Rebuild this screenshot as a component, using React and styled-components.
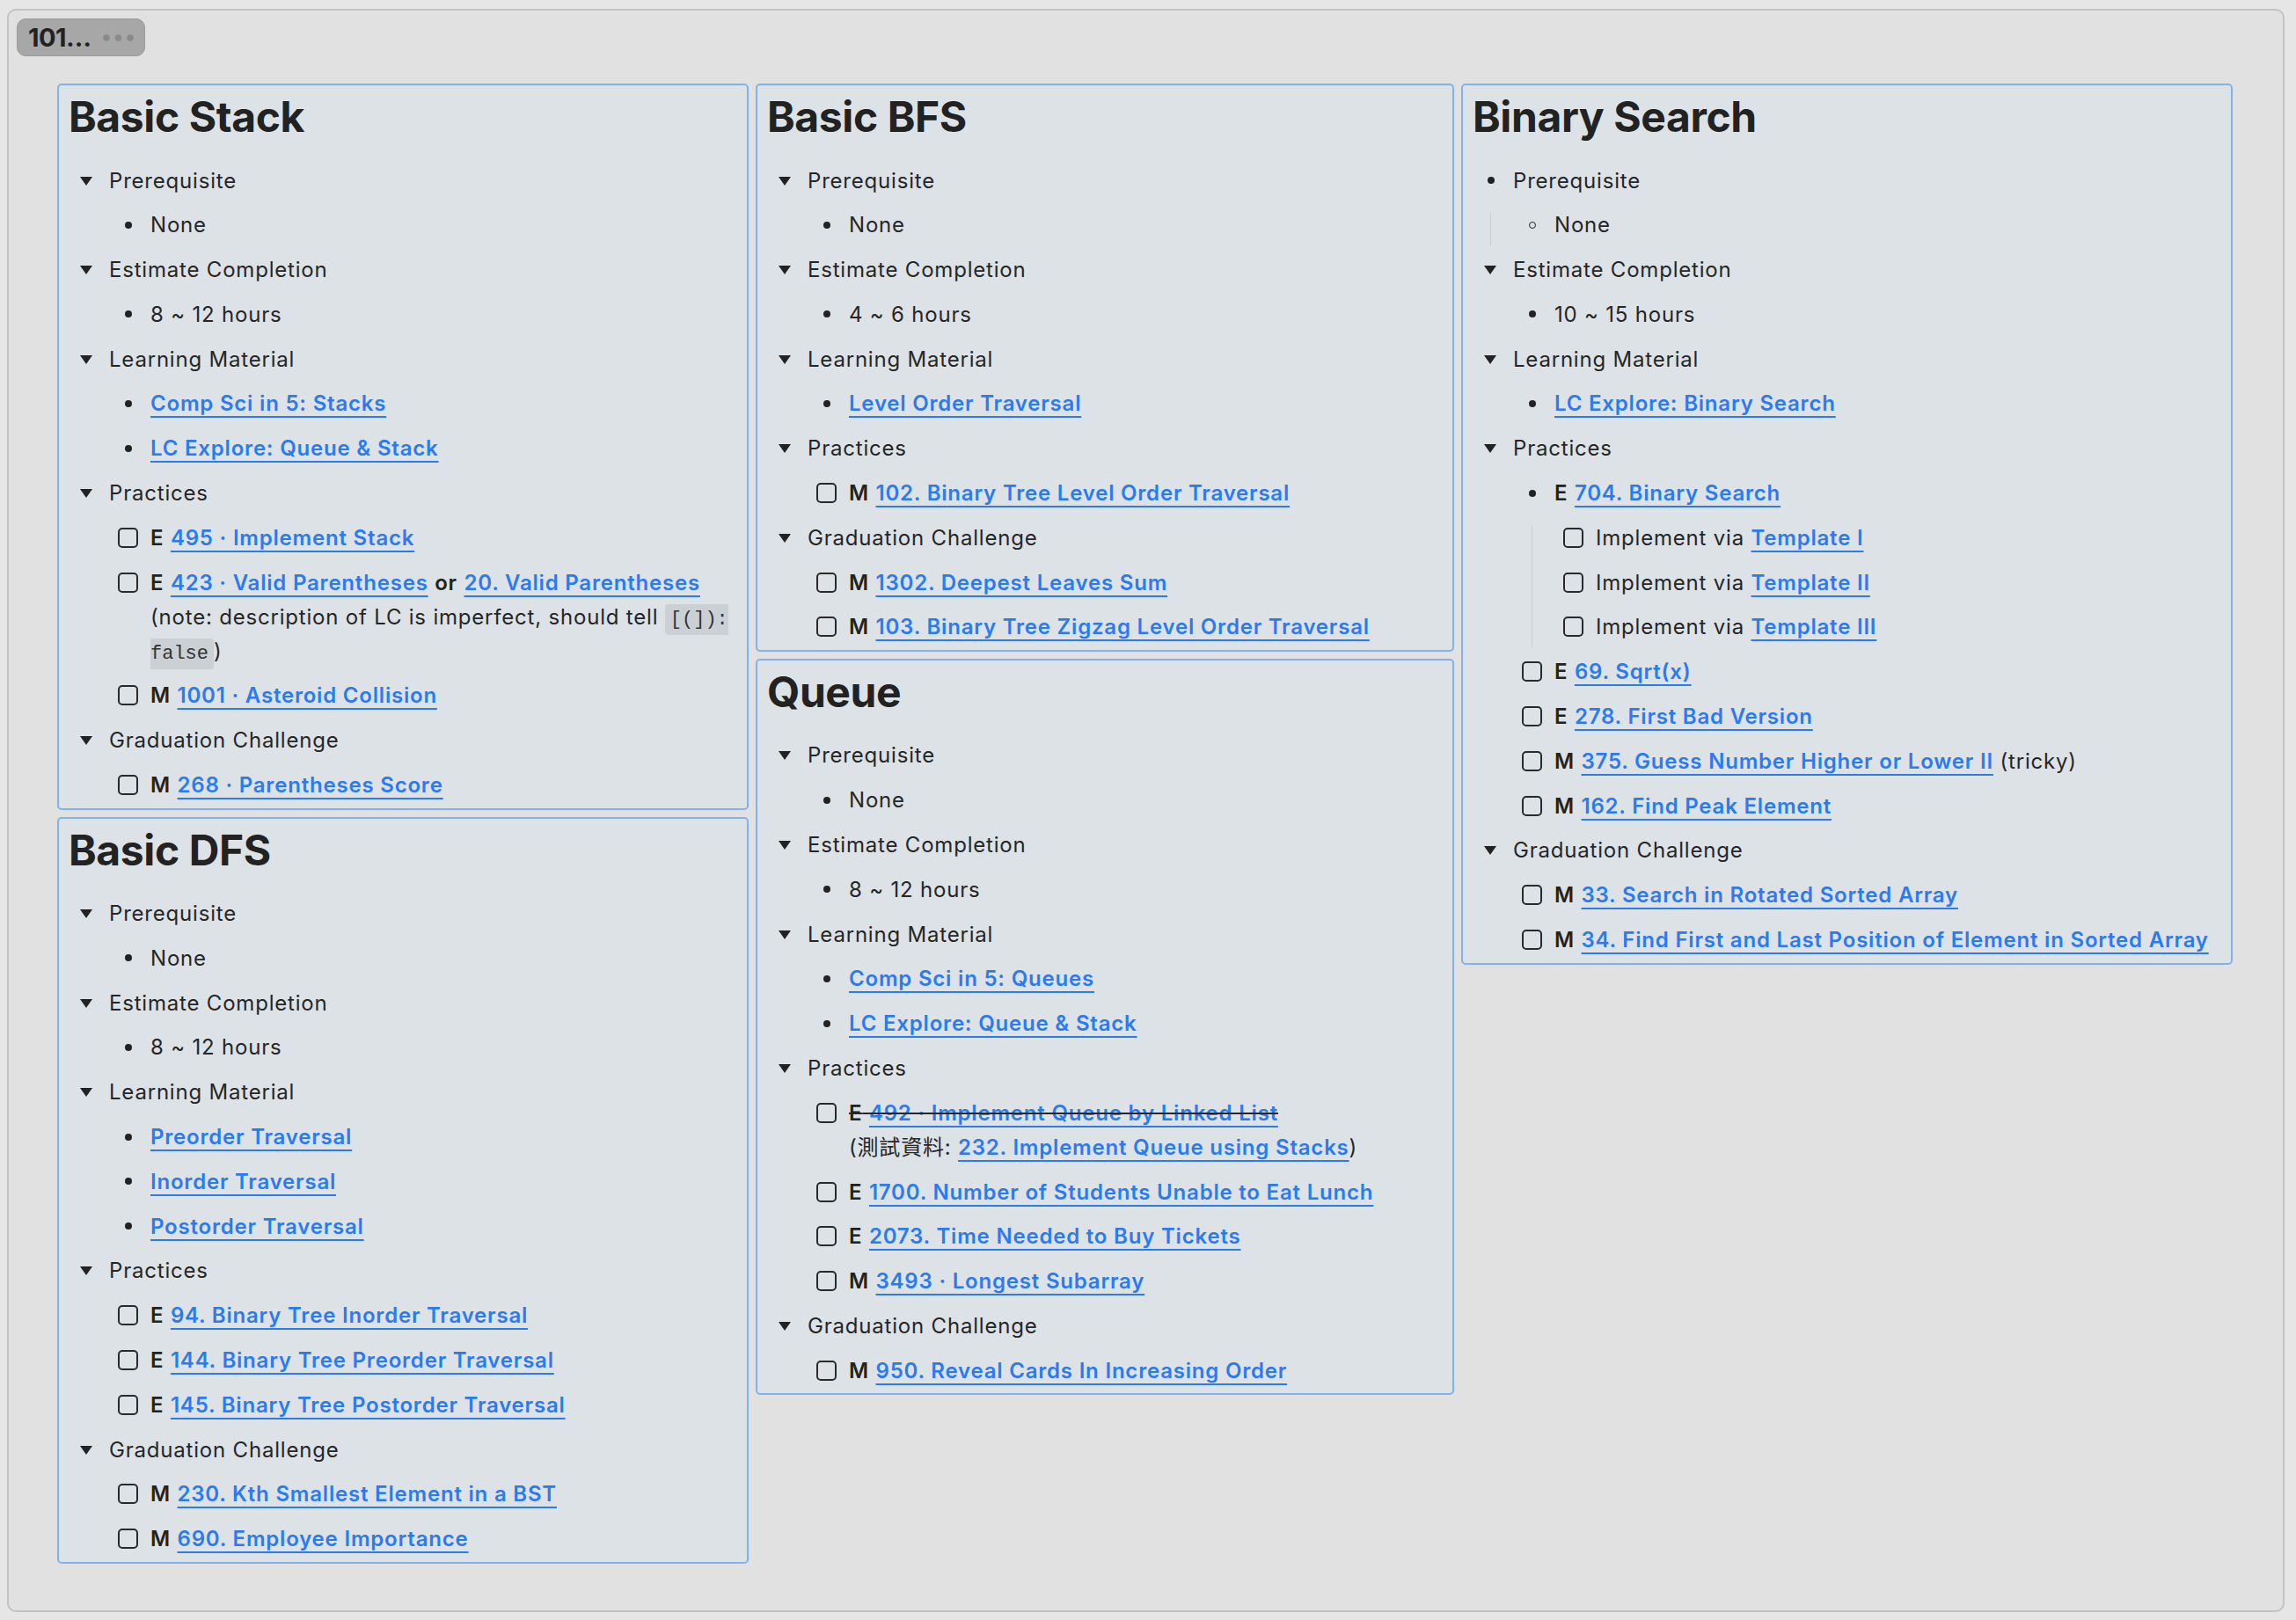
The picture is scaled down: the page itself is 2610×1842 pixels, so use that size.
import styled, { createGlobalStyle, css } from "styled-components";

const GlobalStyle = createGlobalStyle`
    body {
        margin: 0;
        background: #e6e6e6;
        font-family: Inter, "Noto Sans CJK TC", sans-serif;
        color: #262626;
    }
`;

const Frame = styled.div`
    box-sizing: border-box;
    width: 2589px;
    height: 1823px;
    margin: 10px 0 0 8px;
    padding: 9px 0 0 9px;
    background: #e1e1e1;
    border: 2px solid #c3c3c3;
    border-radius: 10px;
`;

const Badge = styled.div`
    box-sizing: border-box;
    display: flex;
    align-items: center;
    gap: 13px;
    width: 146px;
    height: 43px;
    padding-left: 12px;
    background: #a7a7a7;
    border: 1px solid #9b9b9b;
    border-radius: 10px;
    font-size: 29px;
    font-weight: 700;
    letter-spacing: -0.5px;
    color: #222;
`;

const Board = styled.div`
    display: flex;
    align-items: flex-start;
    gap: 8px;
    margin: 31px 0 0 46px;
`;

const Column = styled.div`
    display: flex;
    flex-direction: column;
    gap: 8px;
    width: ${(p) => p.$width}px;
`;

const Card = styled.section`
    box-sizing: border-box;
    padding: 7px 11px 6.5px;
    background: #dce2e6;
    border: 2px solid #80b2ee;
    border-radius: 5px;
`;

const Title = styled.h2`
    margin: 0 0 23.5px;
    font-size: 48px;
    line-height: 58px;
    font-weight: 700;
    letter-spacing: -0.4px;
    color: #222;
`;

const List = styled.ul`
    position: relative;
    list-style: none;
    margin: 0;
    padding: 0 0 0 ${(p) => (p.$nested ? 47 : 46)}px;

    ${(p) =>
        p.$guide &&
        css`
            &::before {
                content: "";
                position: absolute;
                left: -26px;
                top: 6px;
                bottom: -4px;
                width: 1px;
                background: #c6ccd0;
            }
        `}
`;

const marks = {
    toggle: css`
        &::before {
            content: "";
            position: absolute;
            left: -33px;
            top: 15px;
            border-left: 7px solid transparent;
            border-right: 7px solid transparent;
            border-top: 10px solid #222;
        }
    `,
    dot: css`
        &::before {
            content: "";
            position: absolute;
            left: -29.5px;
            top: 15.5px;
            width: 8px;
            height: 8px;
            border-radius: 50%;
            background: #222;
        }
    `,
    ring: css`
        &::before {
            content: "";
            position: absolute;
            left: -29.5px;
            top: 15.5px;
            box-sizing: border-box;
            width: 8px;
            height: 8px;
            border-radius: 50%;
            border: 1.5px solid #222;
        }
    `,
    box: css`
        &::before {
            content: "";
            position: absolute;
            left: -37px;
            top: 8px;
            box-sizing: border-box;
            width: 23px;
            height: 23px;
            border-radius: 5px;
            border: 2px solid #2a2a2a;
        }
    `,
};

const Item = styled.li`
    position: relative;
    margin-top: 11.8px;
    font-size: 24px;
    letter-spacing: 0.8px;
    line-height: 39px;
    ${(p) => marks[p.$mark]}
`;

const Level = styled.b`
    font-weight: 600;
    color: #222;
`;

const Link = styled.a`
    color: #2b7bf0;
    font-weight: 600;
    text-decoration: underline;
    text-decoration-thickness: 1.5px;
    text-underline-offset: 6px;
    cursor: pointer;
`;

const Strike = styled.span`
    text-decoration: line-through;
    text-decoration-thickness: 1.5px;
`;

const Code = styled.code`
    padding: 5px 6px;
    font-family: "Liberation Mono", monospace;
    font-size: 22px;
    line-height: 1;
    letter-spacing: 0;
    color: #333;
    background: #cad0d4;
    border-radius: 4px;
`;

function Dots() {
    return (
        <svg width="36" height="10" viewBox="0 0 36 10">
            <circle cx="4" cy="5" r="3.8" fill="#8a8a8a" />
            <circle cx="17.5" cy="5" r="3.8" fill="#8a8a8a" />
            <circle cx="31" cy="5" r="3.8" fill="#8a8a8a" />
        </svg>
    );
}

const problem = (level, text) => (
    <>
        <Level>{level}</Level> <Link>{text}</Link>
    </>
);

const sec = (title, children, mark = "toggle", guide = false) => ({ mark, content: title, children, guide });
const dot = (content, mark = "dot") => ({ mark, content });
const box = (content) => ({ mark: "box", content });

const cards = {
    stack: {
        title: "Basic Stack",
        items: [
            sec("Prerequisite", [dot("None")]),
            sec("Estimate Completion", [dot("8 ~ 12 hours")]),
            sec("Learning Material", [
                dot(<Link>Comp Sci in 5: Stacks</Link>),
                dot(<Link>LC Explore: Queue &amp; Stack</Link>),
            ]),
            sec("Practices", [
                box(problem("E", "495 · Implement Stack")),
                box(
                    <>
                        <Level>E</Level> <Link>423 · Valid Parentheses</Link> <Level>or</Level>{" "}
                        <Link>20. Valid Parentheses</Link>
                        <br />
                        (note: description of LC is imperfect, should tell <Code>[(]): false</Code>)
                    </>
                ),
                box(problem("M", "1001 · Asteroid Collision")),
            ]),
            sec("Graduation Challenge", [box(problem("M", "268 · Parentheses Score"))]),
        ],
    },
    dfs: {
        title: "Basic DFS",
        items: [
            sec("Prerequisite", [dot("None")]),
            sec("Estimate Completion", [dot("8 ~ 12 hours")]),
            sec("Learning Material", [
                dot(<Link>Preorder Traversal</Link>),
                dot(<Link>Inorder Traversal</Link>),
                dot(<Link>Postorder Traversal</Link>),
            ]),
            sec("Practices", [
                box(problem("E", "94. Binary Tree Inorder Traversal")),
                box(problem("E", "144. Binary Tree Preorder Traversal")),
                box(problem("E", "145. Binary Tree Postorder Traversal")),
            ]),
            sec("Graduation Challenge", [
                box(problem("M", "230. Kth Smallest Element in a BST")),
                box(problem("M", "690. Employee Importance")),
            ]),
        ],
    },
    bfs: {
        title: "Basic BFS",
        items: [
            sec("Prerequisite", [dot("None")]),
            sec("Estimate Completion", [dot("4 ~ 6 hours")]),
            sec("Learning Material", [dot(<Link>Level Order Traversal</Link>)]),
            sec("Practices", [box(problem("M", "102. Binary Tree Level Order Traversal"))]),
            sec("Graduation Challenge", [
                box(problem("M", "1302. Deepest Leaves Sum")),
                box(problem("M", "103. Binary Tree Zigzag Level Order Traversal")),
            ]),
        ],
    },
    queue: {
        title: "Queue",
        items: [
            sec("Prerequisite", [dot("None")]),
            sec("Estimate Completion", [dot("8 ~ 12 hours")]),
            sec("Learning Material", [
                dot(<Link>Comp Sci in 5: Queues</Link>),
                dot(<Link>LC Explore: Queue &amp; Stack</Link>),
            ]),
            sec("Practices", [
                box(
                    <>
                        <Strike>{problem("E", "492 · Implement Queue by Linked List")}</Strike>
                        <br />
                        (測試資料: <Link>232. Implement Queue using Stacks</Link>)
                    </>
                ),
                box(problem("E", "1700. Number of Students Unable to Eat Lunch")),
                box(problem("E", "2073. Time Needed to Buy Tickets")),
                box(problem("M", "3493 · Longest Subarray")),
            ]),
            sec("Graduation Challenge", [box(problem("M", "950. Reveal Cards In Increasing Order"))]),
        ],
    },
    search: {
        title: "Binary Search",
        items: [
            sec("Prerequisite", [dot("None", "ring")], "dot", true),
            sec("Estimate Completion", [dot("10 ~ 15 hours")]),
            sec("Learning Material", [dot(<Link>LC Explore: Binary Search</Link>)]),
            sec("Practices", [
                sec(
                    problem("E", "704. Binary Search"),
                    [
                        box(<>Implement via <Link>Template I</Link></>),
                        box(<>Implement via <Link>Template II</Link></>),
                        box(<>Implement via <Link>Template III</Link></>),
                    ],
                    "dot",
                    true
                ),
                box(problem("E", "69. Sqrt(x)")),
                box(problem("E", "278. First Bad Version")),
                box(
                    <>
                        {problem("M", "375. Guess Number Higher or Lower II")} (tricky)
                    </>
                ),
                box(problem("M", "162. Find Peak Element")),
            ]),
            sec("Graduation Challenge", [
                box(problem("M", "33. Search in Rotated Sorted Array")),
                box(problem("M", "34. Find First and Last Position of Element in Sorted Array")),
            ]),
        ],
    },
};

function Tree({ items, nested, guide }) {
    return (
        <List $nested={nested} $guide={guide}>
            {items.map((it, i) => (
                <Item key={i} $mark={it.mark}>
                    {it.content}
                    {it.children && <Tree items={it.children} nested guide={it.guide} />}
                </Item>
            ))}
        </List>
    );
}

function TopicCard({ data }) {
    return (
        <Card>
            <Title>{data.title}</Title>
            <Tree items={data.items} />
        </Card>
    );
}

export default function App() {
    return (
        <>
            <GlobalStyle />
            <Frame>
                <Badge>
                    <span>101…</span>
                    <Dots />
                </Badge>
                <Board>
                    <Column $width={786}>
                        <TopicCard data={cards.stack} />
                        <TopicCard data={cards.dfs} />
                    </Column>
                    <Column $width={794}>
                        <TopicCard data={cards.bfs} />
                        <TopicCard data={cards.queue} />
                    </Column>
                    <Column $width={877}>
                        <TopicCard data={cards.search} />
                    </Column>
                </Board>
            </Frame>
        </>
    );
}
